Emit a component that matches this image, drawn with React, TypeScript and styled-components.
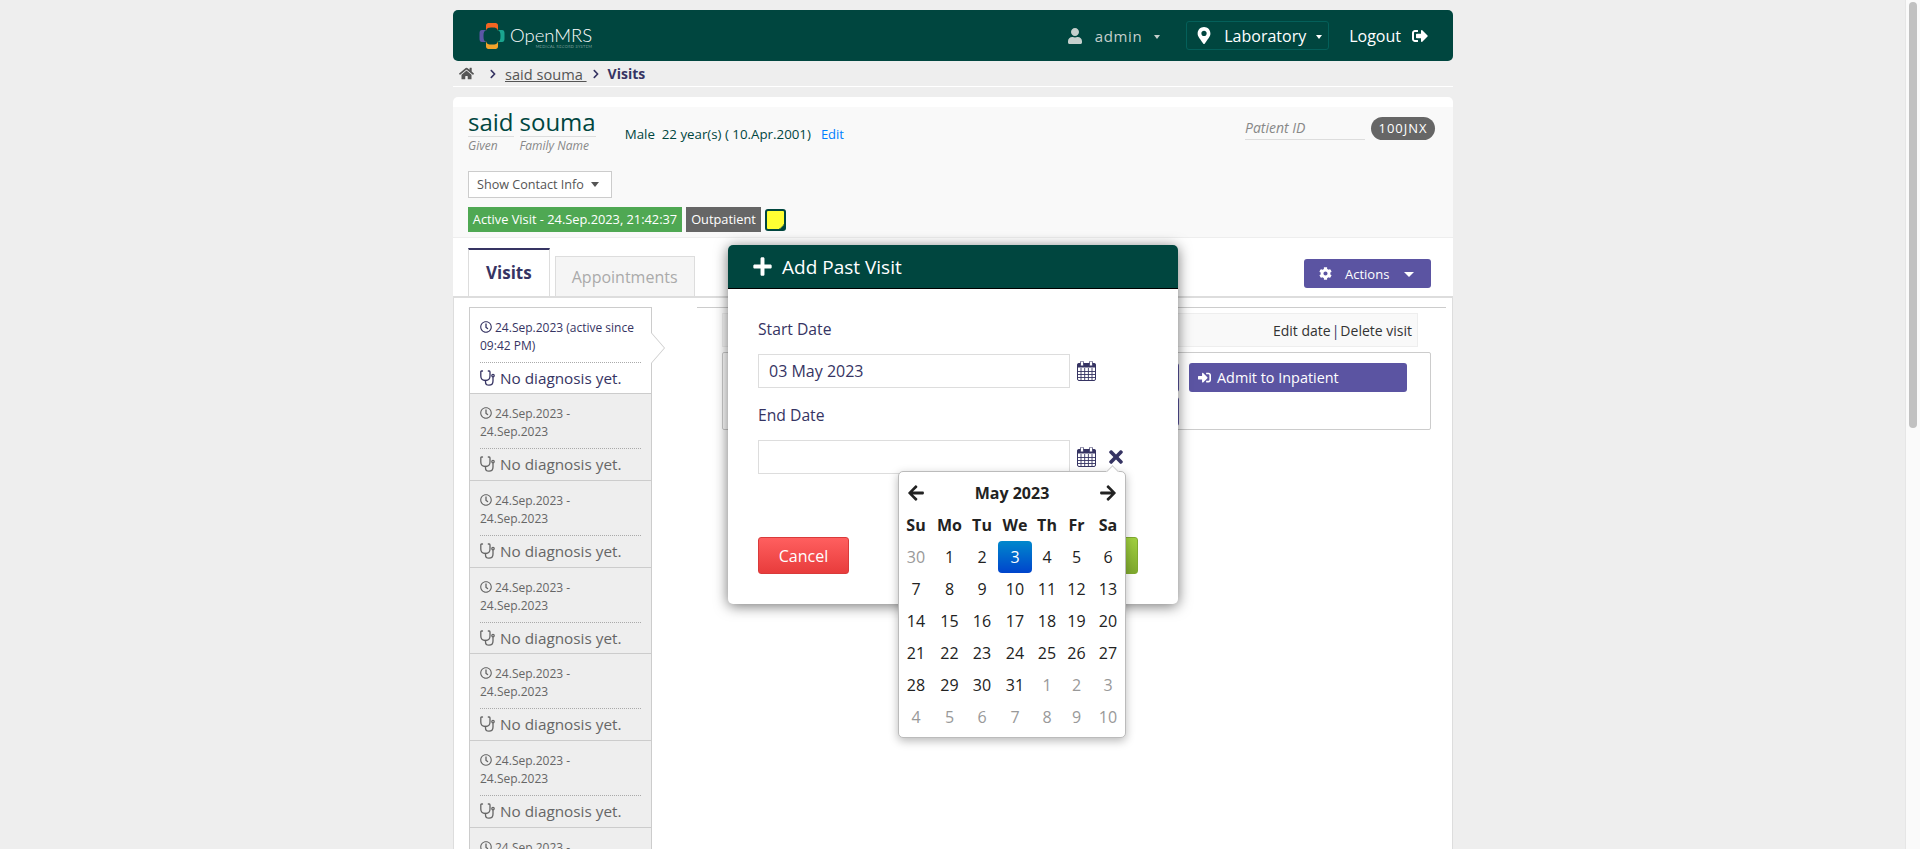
import React, { FC } from 'react';
import styled, { createGlobalStyle } from 'styled-components';
import {
  FaArrowLeft,
  FaArrowRight,
  FaChevronRight,
  FaCog,
  FaHome,
  FaMapMarkerAlt,
  FaPlus,
  FaRegClock,
  FaSignInAlt,
  FaSignOutAlt,
  FaTimes,
  FaUser,
} from 'react-icons/fa';

const green = '#00463f';
const navy = '#363463';
const purple = '#5b54a2';

const GlobalStyle = createGlobalStyle`
  body {
    background: #eee;
    color: ${navy};
    font-family: "Open Sans", "Liberation Sans", sans-serif;
    font-size: 13px;
    margin: 0;
  }
`;

const Shell = styled.div`
  padding-right: 14px;
`;

const ScrollTrack = styled.div`
  background: #fafafa;
  border-left: 1px solid #e6e6e6;
  bottom: 0;
  box-sizing: border-box;
  position: fixed;
  right: 0;
  top: 0;
  width: 15px;
  z-index: 5;
`;

const ScrollThumb = styled.div`
  background: #c1c1c1;
  border-radius: 4px;
  height: 426px;
  margin: 2px 0 0 3px;
  width: 8px;
`;

const Page = styled.div`
  margin: 0 auto;
  padding: 10px 0 0;
  position: relative;
  width: 1000px;
`;

const TopBar = styled.header`
  align-items: center;
  background: ${green};
  border-radius: 5px;
  color: #fff;
  display: flex;
  height: 51px;
  justify-content: space-between;
  padding: 0 25px 0 26px;
`;

const Logo = styled.div`
  align-items: center;
  display: flex;
  gap: 5px;
`;

const LogoText = styled.div`
  color: #fff;
  display: flex;
  flex-direction: column;
  font-family: Lato, "Open Sans", sans-serif;
  font-size: 18.5px;
  font-weight: 300;
  line-height: 20px;
  margin-top: 3px;
`;

const LogoSub = styled.span`
  color: #c4d6d2;
  font-size: 4px;
  letter-spacing: 0.3px;
  line-height: 5px;
  margin-top: -1px;
  text-align: right;
  text-transform: uppercase;
`;

const TopRight = styled.div`
  align-items: center;
  display: flex;
`;

const AdminMenu = styled.div`
  align-items: center;
  color: #c5cfcc;
  display: flex;
  font-size: 15px;
  letter-spacing: 0.6px;
  margin-right: 26px;
`;

const UserIcon = styled(FaUser)`
  font-size: 16px;
  margin-right: 12px;
`;

const LocationMenu = styled.div`
  align-items: center;
  border: 1px solid #04605a;
  border-radius: 3px;
  box-sizing: border-box;
  display: flex;
  font-size: 16px;
  height: 29px;
  padding: 0 6px 0 10px;
  width: 143px;
`;

const MarkerIcon = styled(FaMapMarkerAlt)`
  font-size: 17px;
  margin-right: 13px;
`;

const Logout = styled.div`
  align-items: center;
  display: flex;
  font-size: 16px;
  margin-left: 20px;
`;

const LogoutIcon = styled(FaSignOutAlt)`
  font-size: 16px;
  margin-left: 11px;
`;

const SmallCaret = styled.i<{ $gap: number }>`
  border-left: 3.5px solid transparent;
  border-right: 3.5px solid transparent;
  border-top: 4px solid currentColor;
  display: inline-block;
  margin-left: ${(p) => p.$gap}px;
  margin-top: 3px;
`;

const Crumbs = styled.nav`
  align-items: center;
  border-bottom: 1px solid #fff;
  color: ${navy};
  display: flex;
  font-size: 14px;
  height: 25px;
  padding: 0 0 0 6px;
`;

const HomeIcon = styled(FaHome)`
  color: #555;
  font-size: 15px;
  margin-right: 10px;
`;

const CrumbChevron = styled(FaChevronRight)`
  font-size: 10px;
  margin: 0 7px 0 4px;
`;

const CrumbLink = styled.a`
  color: #555;
  font-size: 14.6px;
  text-decoration: underline;
  white-space: pre;
`;

const CrumbCurrent = styled.b`
  color: ${navy};
`;

const Panel = styled.main`
  background: #fff;
  border-radius: 5px 5px 0 0;
  margin-top: 10px;
  padding-top: 10px;
`;

const PatientHeader = styled.section`
  background: #f9f9f9;
  border-bottom: 1px solid #eee;
  height: 130px;
  padding: 0 18px 0 15px;
`;

const PatientTop = styled.div`
  display: flex;
  height: 48px;
`;

const NameField = styled.div`
  color: #888;
  font-size: 12px;
  font-style: italic;
  line-height: 18px;
  margin-right: 6px;
`;

const NameValue = styled.div`
  border-bottom: 1px solid #ddd;
  color: ${green};
  font-size: 24px;
  font-style: normal;
  line-height: 29px;
`;

const Demographics = styled.div`
  color: ${green};
  font-size: 13.3px;
  line-height: 18px;
  margin: 18px 0 0 23px;
  white-space: pre;
`;

const EditLink = styled.a`
  color: #007fff;
  font-size: 13px;
  margin-left: 10px;
`;

const PatientId = styled.div`
  align-items: flex-start;
  display: flex;
  margin: 10px 0 0 auto;
`;

const PatientIdLabel = styled.div`
  border-bottom: 1px solid #ddd;
  color: #888;
  font-size: 14px;
  font-style: italic;
  height: 22px;
  line-height: 22px;
  margin-right: 6px;
  width: 120px;
`;

const IdBadge = styled.div`
  background: #666;
  border-radius: 12px;
  color: #fff;
  font-size: 13px;
  height: 23px;
  letter-spacing: 1px;
  line-height: 23px;
  text-align: center;
  width: 64px;
`;

const ContactButton = styled.button`
  align-items: center;
  background: #fff;
  border: 1px solid #ccc;
  color: #555;
  display: flex;
  font-family: inherit;
  font-size: 12.6px;
  height: 27px;
  margin-top: 16px;
  padding: 0 0 0 8px;
  width: 144px;
`;

const DarkCaret = styled.i`
  border-left: 4.5px solid transparent;
  border-right: 4.5px solid transparent;
  border-top: 5px solid #555;
  display: inline-block;
  margin-left: 7px;
`;

const Badges = styled.div`
  align-items: center;
  display: flex;
  gap: 4px;
  margin-top: 9px;
`;

const Badge = styled.div<{ $bg: string; $w: number }>`
  background: ${(p) => p.$bg};
  color: #fff;
  font-size: 12.8px;
  height: 25px;
  line-height: 25px;
  text-align: center;
  width: ${(p) => p.$w}px;
`;

const TabBar = styled.div`
  align-items: flex-end;
  display: flex;
  height: 58px;
  justify-content: space-between;
  padding: 0 22px 0 15px;
`;

const Tabs = styled.div`
  align-items: flex-end;
  display: flex;
  gap: 5px;
`;

const Tab = styled.div<{ $active?: boolean }>`
  background: ${(p) => (p.$active ? '#fff' : '#f5f5f5')};
  border: 1px solid #ddd;
  border-bottom: 0;
  border-top: ${(p) => (p.$active ? `2px solid ${navy}` : '1px solid #ddd')};
  color: ${(p) => (p.$active ? navy : '#aaa')};
  font-size: ${(p) => (p.$active ? 17 : 16)}px;
  font-weight: ${(p) => (p.$active ? 700 : 400)};
  height: ${(p) => (p.$active ? 46 : 39)}px;
  line-height: ${(p) => (p.$active ? 46 : 40)}px;
  padding: 0 ${(p) => (p.$active ? 17 : 16)}px;
  text-align: center;
`;

const ActionsButton = styled.button`
  align-items: center;
  background: ${purple};
  border: 0;
  border-radius: 3px;
  color: #fff;
  display: flex;
  font-family: inherit;
  font-size: 13px;
  height: 29px;
  margin-bottom: 8px;
  padding: 0 0 0 15px;
  width: 127px;
`;

const ActionsLabel = styled.span`
  margin-left: 13px;
`;

const WhiteCaret = styled.i`
  border-left: 5px solid transparent;
  border-right: 5px solid transparent;
  border-top: 5px solid #fff;
  display: inline-block;
  margin-left: 15px;
  margin-top: 2px;
`;

const Content = styled.section`
  background: #fff;
  border: 1px solid #ddd;
  border-bottom: 0;
  border-top-width: 2px;
  display: flex;
  padding: 9px 6px 0 15px;
`;

const VisitList = styled.div`
  flex: 0 0 183px;
  margin-right: 45px;
`;

const VisitItem = styled.div<{ $active?: boolean }>`
  background: ${(p) => (p.$active ? '#fff' : '#eee')};
  border: 1px solid #ccc;
  border-top-width: ${(p) => (p.$active ? 1 : 0)}px;
  box-sizing: border-box;
  color: ${(p) => (p.$active ? navy : '#666')};
  height: ${(p) => (p.$active ? 87 : 86.8)}px;
  padding: 11px 10px 0;
  position: relative;
`;

const VisitDate = styled.div`
  border-bottom: 1px dotted #aaa;
  font-size: 12px;
  height: 43px;
  line-height: 18px;
`;

const Clock = styled(FaRegClock)`
  font-size: 12px;
  margin-right: 3px;
  vertical-align: -1px;
`;

const Diagnosis = styled.div`
  align-items: center;
  display: flex;
  font-size: 15.3px;
  gap: 5px;
  height: 26px;
  margin-top: 2px;
`;

const StethoscopeIcon = styled.svg`
  fill: none;
  flex: none;
  height: 16px;
  stroke: currentColor;
  stroke-linecap: round;
  stroke-width: 1.3;
  width: 15px;
`;

const Pointer = styled.div`
  border-bottom: 15px solid transparent;
  border-left: 13px solid #ccc;
  border-top: 15px solid transparent;
  height: 0;
  position: absolute;
  right: -14px;
  top: 25px;
  width: 0;

  &::after {
    border-bottom: 15px solid transparent;
    border-left: 13px solid #fff;
    border-top: 15px solid transparent;
    content: '';
    left: -14px;
    position: absolute;
    top: -15px;
  }
`;

const Details = styled.div`
  border-top: 1px solid #ccc;
  flex: 1;
  height: 130px;
  padding: 5px 0 0 25px;
`;

const VisitActions = styled.div`
  align-items: center;
  background: #f9f9f9;
  border: 1px solid #eee;
  box-sizing: border-box;
  color: #333;
  display: flex;
  font-size: 14px;
  height: 34px;
  justify-content: flex-end;
  padding-right: 5px;
  width: 696px;
`;

const Divider = styled.span`
  color: ${navy};
  margin: 0 1px;
`;

const VisitBox = styled.div`
  border: 1px solid #ccc;
  border-radius: 2px;
  box-sizing: border-box;
  display: flex;
  gap: 10px;
  height: 78px;
  justify-content: flex-end;
  margin-top: 5px;
  padding: 10px 23px 0 0;
  width: 709px;
`;

const ButtonStack = styled.div`
  display: flex;
  flex-direction: column;
  gap: 5px;
  width: 218px;
`;

const ActionStub = styled.div`
  background: ${purple};
  border-radius: 3px;
  height: 29px;
`;

const AdmitButton = styled.button`
  align-items: center;
  background: ${purple};
  border: 0;
  border-radius: 3px;
  color: #fff;
  display: flex;
  font-family: inherit;
  font-size: 14.4px;
  gap: 6px;
  height: 29px;
  padding: 0 0 0 9px;
  width: 218px;
`;

const Modal = styled.div`
  background: #fff;
  border-radius: 5px;
  box-shadow: 0 2px 14px rgba(0, 0, 0, 0.55);
  left: 275px;
  position: absolute;
  top: 245px;
  width: 450px;
`;

const ModalTitle = styled.h2`
  align-items: center;
  background: ${green};
  border-bottom: 1px solid #000;
  border-radius: 5px 5px 0 0;
  box-sizing: border-box;
  color: #fff;
  display: flex;
  font-size: 19px;
  font-weight: 400;
  gap: 9px;
  height: 44px;
  margin: 0;
  padding: 0 0 0 24px;
`;

const ModalBody = styled.div`
  padding: 30px 40px 30px 30px;
`;

const FieldLabel = styled.label<{ $first?: boolean }>`
  display: block;
  font-size: 15.7px;
  line-height: 20px;
  margin: ${(p) => (p.$first ? 0 : 17)}px 0 15px;
`;

const FieldRow = styled.div`
  align-items: center;
  display: flex;
  height: 34px;
`;

const DateInput = styled.div`
  border: 1px solid #ddd;
  box-sizing: border-box;
  font-size: 16px;
  height: 34px;
  line-height: 32px;
  padding-left: 10px;
  width: 312px;
`;

const CalendarIcon = styled.svg`
  height: 20px;
  margin-left: 7px;
  width: 19px;
`;

const Clear = styled(FaTimes)`
  font-size: 20px;
  margin-left: 10px;
`;

const ModalButtons = styled.div`
  display: flex;
  justify-content: space-between;
  margin-top: 63px;
`;

const Cancel = styled.button`
  background: linear-gradient(#ff5f5f, #e83c3c);
  border: 1px solid #d93a3a;
  border-radius: 3px;
  color: #fff;
  font-family: inherit;
  font-size: 16px;
  height: 37px;
  width: 91px;
`;

const Save = styled.button`
  background: linear-gradient(#a0d03f, #7fa92e);
  border: 1px solid #7fa92e;
  border-radius: 3px;
  color: #fff;
  font-family: inherit;
  font-size: 16px;
  height: 37px;
  width: 91px;
`;

const Picker = styled.div`
  background: #fff;
  border: 1px solid #bbb;
  border-radius: 5px;
  box-shadow: 0 3px 10px rgba(0, 0, 0, 0.28);
  color: #222;
  display: grid;
  font-size: 16px;
  grid-auto-rows: 32px;
  grid-template-columns: 34px 33px 32px 34px 30px 29px 34px;
  left: 170px;
  padding: 5px 0 4px;
  position: absolute;
  top: 226px;
  width: 226px;
`;

const Notch = styled.div`
  background: #fff;
  border-left: 1px solid #ccc;
  border-top: 1px solid #ccc;
  height: 8px;
  position: absolute;
  right: 8px;
  top: -5px;
  transform: rotate(45deg);
  width: 8px;
`;

const Cell = styled.div<{ $muted?: boolean; $selected?: boolean }>`
  align-items: center;
  background: ${(p) =>
    p.$selected ? 'linear-gradient(#08c, #04c)' : 'transparent'};
  border-radius: ${(p) => (p.$selected ? 4 : 0)}px;
  color: ${(p) => (p.$selected ? '#fff' : p.$muted ? '#999' : '#222')};
  display: flex;
  justify-content: center;
`;

const DayName = styled(Cell)`
  font-weight: 700;
`;

const MonthTitle = styled(Cell)`
  font-weight: 700;
  grid-column: span 5;
`;

const LogoMark: FC = () => (
  <svg width="26" height="26" viewBox="0 0 25 26">
    <path d="M6.5 8 C7 5 9 4.5 12.5 4.5 C16 4.5 18 5 18.5 8 L18.5 2.5 C18.5 0.5 17 0 15 0 L10 0 C8 0 6.5 0.5 6.5 2.5 Z" fill="#f26522" />
    <path d="M18 7 C20.5 7.5 21 9.5 21 13 C21 16.5 20.5 18.5 18 19 L22.5 19 C24.5 19 25 17.5 25 15.5 L25 10.5 C25 8.5 24.5 7 22.5 7 Z" fill="#1aa58f" />
    <path d="M6.5 18 C7 21 9 21.5 12.5 21.5 C16 21.5 18 21 18.5 18 L18.5 23.5 C18.5 25.5 17 26 15 26 L10 26 C8 26 6.5 25.5 6.5 23.5 Z" fill="#f0a32a" />
    <path d="M7 7 C4.5 7.5 4 9.5 4 13 C4 16.5 4.5 18.5 7 19 L2.5 19 C0.5 19 0 17.5 0 15.5 L0 10.5 C0 8.5 0.5 7 2.5 7 Z" fill="#5b57a6" />
  </svg>
);

const CalendarGlyph: FC = () => (
  <CalendarIcon viewBox="0 0 19 20">
    <rect x="0.5" y="2.5" width="18" height="17" rx="1.5" fill="#fff" stroke={navy} />
    <rect x="0.5" y="2.5" width="18" height="4" fill={navy} />
    <rect x="3.5" y="0" width="3" height="5" rx="1.2" fill="#fff" stroke={navy} strokeWidth="0.8" />
    <rect x="12.5" y="0" width="3" height="5" rx="1.2" fill="#fff" stroke={navy} strokeWidth="0.8" />
    <path d="M0 10.5H19M0 13.5H19M0 16.5H19M4 7V19M7.7 7V19M11.4 7V19M15 7V19" stroke={navy} strokeWidth="0.9" />
  </CalendarIcon>
);

const StethoscopeGlyph: FC = () => (
  <StethoscopeIcon viewBox="0 0 15 16">
    <path d="M2.5 1 L1.6 1 Q0.8 1 0.8 2 L0.8 6 Q0.8 10.5 5.5 10.5 Q10 10.5 10 6 L10 2 Q10 1 9.2 1 L8.3 1" />
    <path d="M5.5 10.5 V12 Q5.5 15.2 9 15.2 Q13 15.2 13 11 V7.2" />
    <circle cx="13" cy="5.6" r="1.2" />
  </StethoscopeIcon>
);

const StickyNote: FC = () => (
  <svg width="21" height="22" viewBox="0 0 21 22">
    <rect width="21" height="22" rx="3" fill={green} />
    <path d="M2 3 a1 1 0 0 1 1 -1 H18 a1 1 0 0 1 1 1 V15 L14 20 H3 a1 1 0 0 1 -1 -1 Z" fill="#ffff33" />
    <path d="M15 16 H19 L15 20 Z" fill="#ffff33" opacity="0.6" />
  </svg>
);

const weekdays = ['Su', 'Mo', 'Tu', 'We', 'Th', 'Fr', 'Sa'];

// six rows of seven, the first and the last days belong to the next/previous month
const getDays = () => {
  const days = [{ label: 30, muted: true }];
  for (let i = 1; i <= 31; i++) days.push({ label: i, muted: false });
  for (let i = 1; i <= 10; i++) days.push({ label: i, muted: true });
  return days;
};

const pastVisits = Array.from({ length: 7 }, (_, index) => index);

const App: FC = () => (
  <>
    <GlobalStyle />
    <Shell>
      <Page>
        <TopBar>
          <Logo>
            <LogoMark />
            <LogoText>
              OpenMRS
              <LogoSub>Medical Record System</LogoSub>
            </LogoText>
          </Logo>
          <TopRight>
            <AdminMenu>
              <UserIcon />
              admin
              <SmallCaret $gap={12} />
            </AdminMenu>
            <LocationMenu>
              <MarkerIcon />
              Laboratory
              <SmallCaret $gap={10} />
            </LocationMenu>
            <Logout>
              Logout
              <LogoutIcon />
            </Logout>
          </TopRight>
        </TopBar>

        <Crumbs>
          <HomeIcon />
          <CrumbChevron />
          <CrumbLink>said souma </CrumbLink>
          <CrumbChevron />
          <CrumbCurrent>Visits</CrumbCurrent>
        </Crumbs>

        <Panel>
          <PatientHeader>
            <PatientTop>
              <NameField>
                <NameValue>said</NameValue>
                Given
              </NameField>
              <NameField>
                <NameValue>souma</NameValue>
                Family Name
              </NameField>
              <Demographics>
                Male  22 year(s) ( 10.Apr.2001)
                <EditLink>Edit</EditLink>
              </Demographics>
              <PatientId>
                <PatientIdLabel>Patient ID</PatientIdLabel>
                <IdBadge>100JNX</IdBadge>
              </PatientId>
            </PatientTop>
            <ContactButton>
              Show Contact Info
              <DarkCaret />
            </ContactButton>
            <Badges>
              <Badge $bg="#4fa853" $w={214}>
                Active Visit - 24.Sep.2023, 21:42:37
              </Badge>
              <Badge $bg="#666" $w={75}>
                Outpatient
              </Badge>
              <StickyNote />
            </Badges>
          </PatientHeader>

          <TabBar>
            <Tabs>
              <Tab $active>Visits</Tab>
              <Tab>Appointments</Tab>
            </Tabs>
            <ActionsButton>
              <FaCog size={13} />
              <ActionsLabel>Actions</ActionsLabel>
              <WhiteCaret />
            </ActionsButton>
          </TabBar>

          <Content>
            <VisitList>
              <VisitItem $active>
                <VisitDate>
                  <Clock />
                  24.Sep.2023 (active since 09:42 PM)
                </VisitDate>
                <Diagnosis>
                  <StethoscopeGlyph />
                  No diagnosis yet.
                </Diagnosis>
                <Pointer />
              </VisitItem>
              {pastVisits.map((visit) => (
                <VisitItem key={visit}>
                  <VisitDate>
                    <Clock />
                    24.Sep.2023 - 24.Sep.2023
                  </VisitDate>
                  <Diagnosis>
                    <StethoscopeGlyph />
                    No diagnosis yet.
                  </Diagnosis>
                </VisitItem>
              ))}
            </VisitList>

            <Details>
              <VisitActions>
                Edit date
                <Divider>|</Divider>
                Delete visit
              </VisitActions>
              <VisitBox>
                <ButtonStack>
                  <ActionStub />
                  <ActionStub />
                </ButtonStack>
                <AdmitButton>
                  <FaSignInAlt size={13} />
                  Admit to Inpatient
                </AdmitButton>
              </VisitBox>
            </Details>
          </Content>
        </Panel>

        <Modal>
          <ModalTitle>
            <FaPlus size={21} />
            Add Past Visit
          </ModalTitle>
          <ModalBody>
            <FieldLabel $first>Start Date</FieldLabel>
            <FieldRow>
              <DateInput>03 May 2023</DateInput>
              <CalendarGlyph />
            </FieldRow>
            <FieldLabel>End Date</FieldLabel>
            <FieldRow>
              <DateInput />
              <CalendarGlyph />
              <Clear />
            </FieldRow>
            <ModalButtons>
              <Cancel>Cancel</Cancel>
              <Save>Save</Save>
            </ModalButtons>
          </ModalBody>
          <Picker>
            <Notch />
            <Cell>
              <FaArrowLeft size={18} />
            </Cell>
            <MonthTitle>May 2023</MonthTitle>
            <Cell>
              <FaArrowRight size={18} />
            </Cell>
            {weekdays.map((weekday) => (
              <DayName key={weekday}>{weekday}</DayName>
            ))}
            {getDays().map((day, index) => (
              <Cell key={index} $muted={day.muted} $selected={!day.muted && day.label === 3}>
                {day.label}
              </Cell>
            ))}
          </Picker>
        </Modal>
      </Page>
    </Shell>
    <ScrollTrack>
      <ScrollThumb />
    </ScrollTrack>
  </>
);

export default App;
